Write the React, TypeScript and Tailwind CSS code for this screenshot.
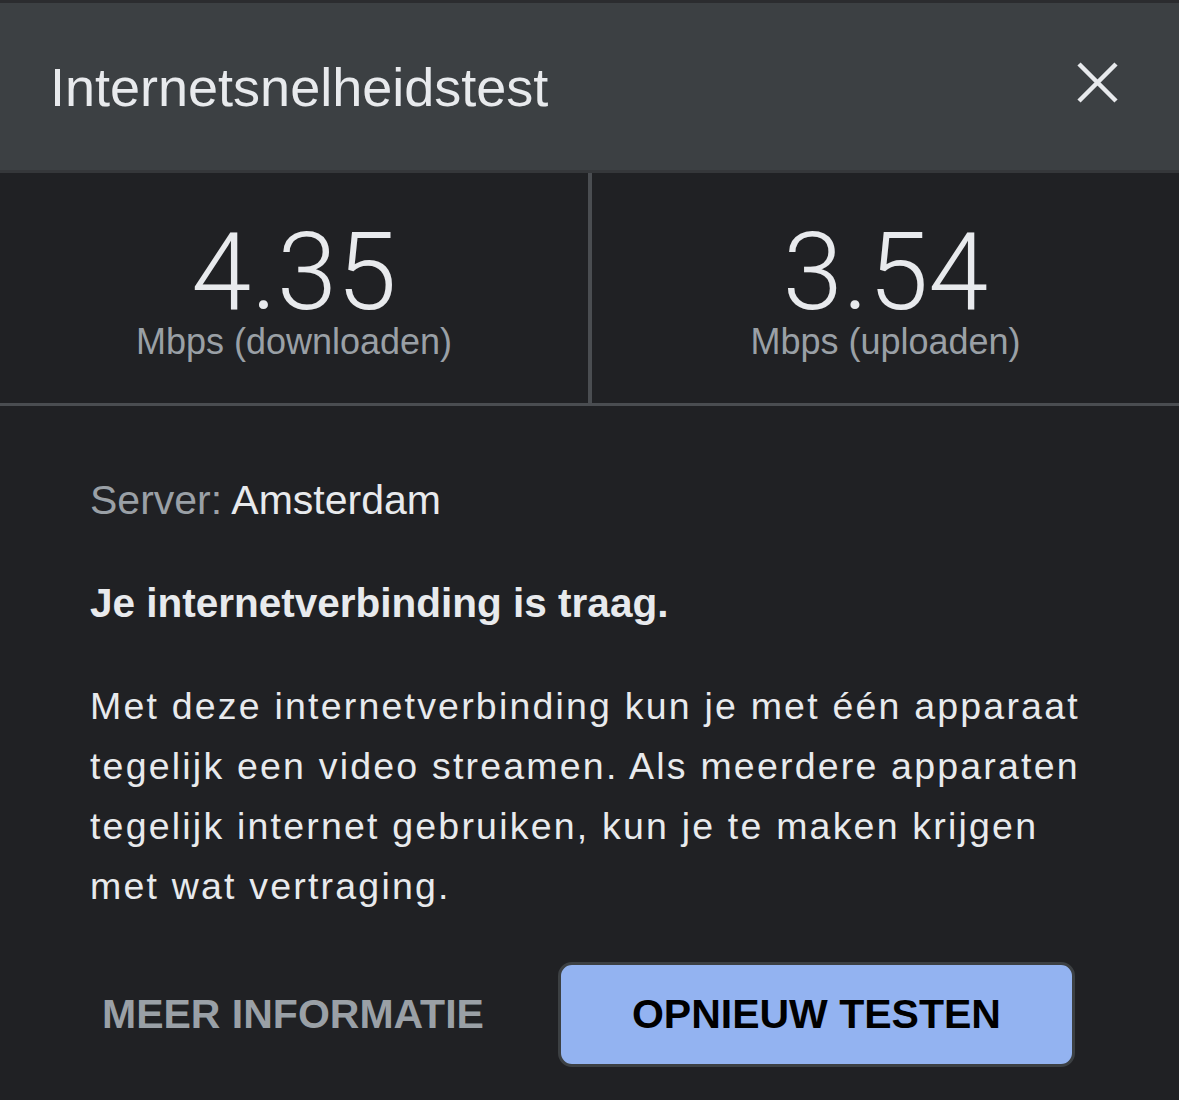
import React from "react";

const Stat = ({ value, label }: { value: string; label: string }) => (
  <div className="flex flex-col items-center pt-[49px]">
    <div className="text-[108px] leading-[100px] font-light text-[#e8eaed] font-['Roboto',sans-serif]">{value}</div>
    <div className="text-[36px] leading-[40px] text-[#9aa0a6]">{label}</div>
  </div>
);

export default function App() {
  return (
    <div className="w-[1179px] h-[1100px] bg-[#202124] font-['Liberation_Sans',Arial,sans-serif] overflow-hidden">
      <div className="h-[3px] bg-[#2b2c2f]" />
      <div className="h-[170px] bg-[#3c4043] flex items-center justify-between pl-[50px] pr-[61px] border-b-[3px] border-[#35373a]">
        <h1 className="text-[54px] leading-[60px] text-[#e8eaed]">Internetsnelheidstest</h1>
        <svg width="41" height="41" viewBox="0 0 41 41" className="text-[#e8eaed] mb-[8px]">
          <path d="M2 2L39 39M39 2L2 39" stroke="currentColor" strokeWidth="4.5" />
        </svg>
      </div>
      <div className="grid grid-cols-[588px_4px_1fr] h-[233px] border-b-[3px] border-[#4a4d51]">
        <Stat value="4.35" label="Mbps (downloaden)" />
        <div className="bg-[#4a4d51]" />
        <Stat value="3.54" label="Mbps (uploaden)" />
      </div>
      <div className="px-[90px] pt-[70px]">
        <p className="text-[41px] leading-[48px] text-[#e8eaed]">
          <span className="text-[#9aa0a6] font-light">Server:</span> Amsterdam
        </p>
        <p className="mt-[55px] text-[40.5px] leading-[48px] font-semibold text-[#e8eaed]">
          Je internetverbinding is traag.
        </p>
        <p className="mt-[49px] text-[37.5px] leading-[60px] tracking-[2.2px] text-[#e8eaed]">
          Met deze internetverbinding kun je met één apparaat
          <br />
          tegelijk een video streamen. Als meerdere apparaten
          <br />
          tegelijk internet gebruiken, kun je te maken krijgen
          <br />
          met wat vertraging.
        </p>
        <div className="flex items-center mt-[46px] gap-[74px]">
          <button className="ml-[12px] text-[41px] font-bold text-[#9aa0a6]">MEER INFORMATIE</button>
          <button className="w-[517px] h-[105px] rounded-[14px] bg-[#93b3f1] border-[3px] border-[#3c4043] text-[41px] font-bold text-black">
            OPNIEUW TESTEN
          </button>
        </div>
      </div>
    </div>
  );
}
